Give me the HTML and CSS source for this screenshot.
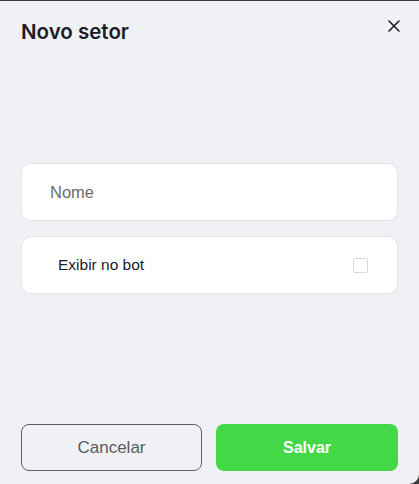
FILE: index.html
```html
<!DOCTYPE html>
<html lang="pt">
<head>
  <meta charset="UTF-8" />
  <title>Novo setor</title>
  <meta name="viewport" content="width=device-width, initial-scale=1.0" />
  <link rel="stylesheet" href="styles.css">
</head>
<body>
  <div class="modal">
    <div class="modal-header">
      <h3>Novo setor</h3>
      <i class="close">
        <svg width="12" height="12" viewBox="0 0 12 12"><path d="M1 1L11 11M11 1L1 11" stroke="#1c1c28" stroke-width="1.6" stroke-linecap="round"/></svg>
      </i>
    </div>

    <div class="fields">
      <div class="field">
        <input type="text" placeholder="Nome" />
      </div>
      <label class="field check-row">
        <span>Exibir no bot</span>
        <span class="box"></span>
      </label>
    </div>

    <div class="buttons">
      <button class="cancel">Cancelar</button>
      <button class="save">Salvar</button>
    </div>
  </div>
</body>
</html>
```

FILE: styles.css
```css
html, body {
  margin: 0;
  height: 100%;
}
body {
  background: #3a3a3a;
  font-family: 'Liberation Sans', Arial, sans-serif;
}
.modal {
  box-sizing: border-box;
  height: 483px;
  margin-top: 1px;
  background: #f0f1f5;
  border-bottom-right-radius: 10px;
  padding: 0 21px 13px 21px;
  display: flex;
  flex-direction: column;
}
.modal-header {
  display: flex;
  align-items: flex-start;
  justify-content: space-between;
  padding-top: 18px;
}
.modal-header h3 {
  margin: 0;
  font-family: Inter, sans-serif;
  font-size: 20.5px;
  font-weight: 600;
  color: #1c1c28;
}
.close {
  margin-top: -1px;
  margin-right: -2px;
  cursor: pointer;
}
.fields {
  margin-top: 119px;
  display: flex;
  flex-direction: column;
  gap: 15px;
}
.field {
  box-sizing: border-box;
  height: 58px;
  background: white;
  border: 1px solid #e3e4e8;
  border-radius: 10px;
  display: flex;
  align-items: center;
}
.field input {
  border: none;
  outline: none;
  background: transparent;
  width: 100%;
  padding: 0 0 0 28px;
  font-family: 'Liberation Sans', Arial, sans-serif;
  font-size: 16.5px;
  color: #222;
}
.field input::placeholder {
  color: #6b6b6b;
}
.check-row {
  justify-content: space-between;
  padding: 0 29px 0 36px;
  font-size: 15.5px;
  color: #1a1a2a;
}
.box {
  width: 13px;
  height: 13px;
  border: 1px solid #d9d9dc;
  border-radius: 2px;
}
.buttons {
  margin-top: auto;
  display: grid;
  grid-template-columns: 181px 182px;
  gap: 14px;
}
button {
  height: 47px;
  border-radius: 8px;
  font-family: 'Liberation Sans', Arial, sans-serif;
  font-size: 16px;
  cursor: pointer;
}
.cancel {
  background: transparent;
  border: 1px solid #5f5f63;
  color: #5a5a5e;
  font-size: 17px;
}
.save {
  background: #43d845;
  border: none;
  color: white;
  font-weight: bold;
}
```
